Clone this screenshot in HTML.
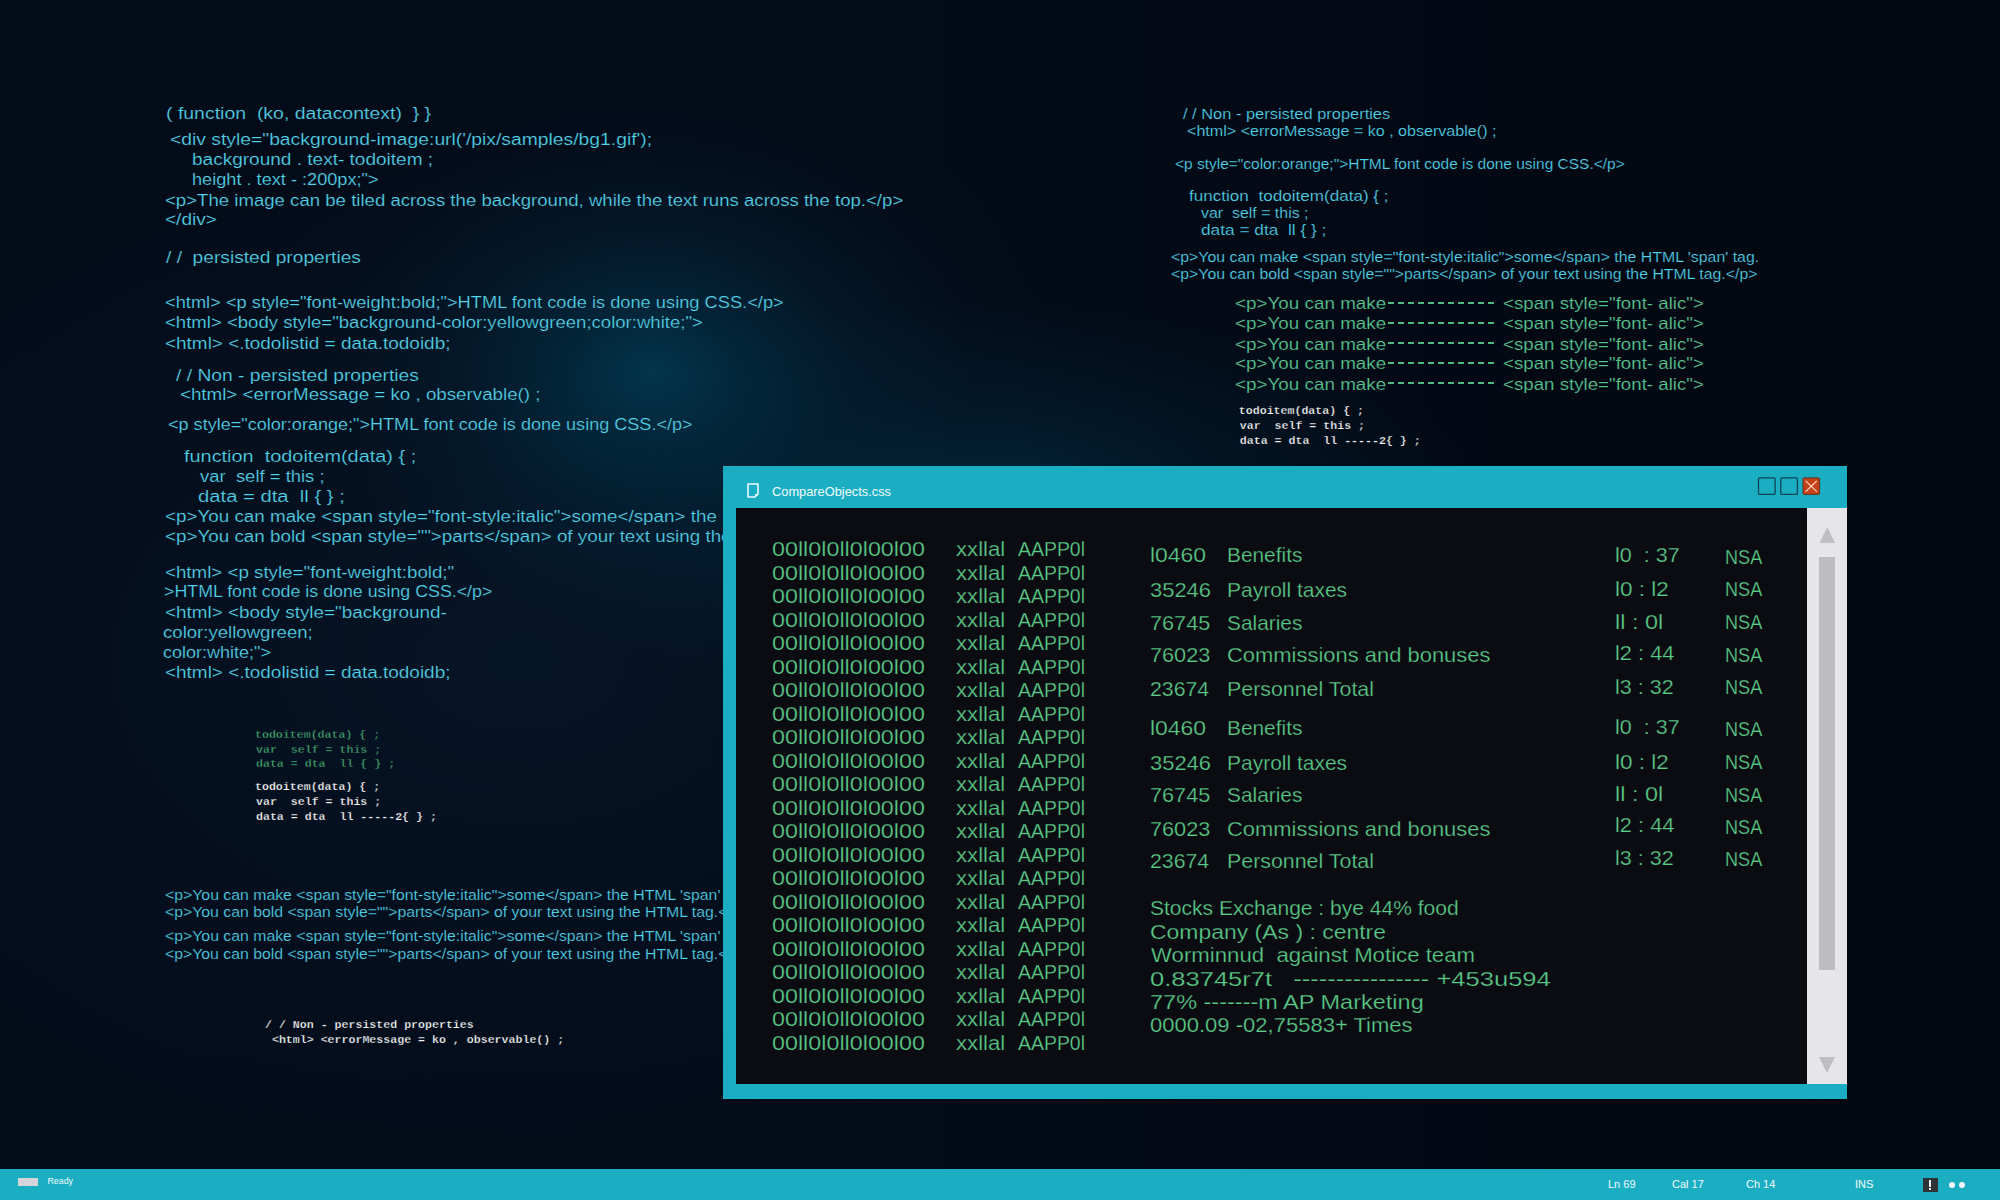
<!DOCTYPE html>
<html><head><meta charset="utf-8"><title>CompareObjects.css</title>
<style>
*{margin:0;padding:0;box-sizing:border-box}
html,body{width:2000px;height:1200px;overflow:hidden;background:#030a17}
body{position:relative;font-family:"Liberation Sans", sans-serif}
.bg{position:absolute;left:0;top:0;width:2000px;height:1200px;
 background:
  radial-gradient(ellipse 400px 300px at 652px 372px, rgba(2,62,86,0.80) 0%, rgba(3,50,72,0.62) 22%, rgba(3,36,56,0.38) 50%, rgba(3,22,38,0.12) 80%, rgba(3,20,36,0) 100%),
  radial-gradient(ellipse 520px 200px at 960px 500px, rgba(2,48,70,0.75) 0%, rgba(2,36,56,0.45) 45%, rgba(2,20,36,0) 100%),
  radial-gradient(ellipse 760px 520px at 520px 660px, rgba(6,22,40,0.85) 0%, rgba(5,18,34,0.5) 55%, rgba(3,10,23,0) 100%),
  linear-gradient(90deg, #040c1a 0%, #030b18 50%, #03070f 100%);}
.t{position:absolute;white-space:pre;transform-origin:0 0}
.cy{color:#54d3ea;-webkit-text-stroke:0.2px #041522}
.gr{color:#5ac792;-webkit-text-stroke:0.2px #04101c}
.wg{color:#5ccb88;-webkit-text-stroke:0.25px #0b0c12}
.mg{color:#44aa72;-webkit-text-stroke:0.35px #05101c}
.mw{color:#f6f6f6;-webkit-text-stroke:0.25px #05101c}
.win{position:absolute;left:723px;top:466px;width:1124px;height:633px;background:#1baec3}
.content{position:absolute;left:736px;top:508px;width:1071px;height:576px;background:#0b0c12}
.sb{position:absolute;left:1807px;top:508px;width:40px;height:576px;background:#e6e6e8}
.thumb{position:absolute;left:1819px;top:557px;width:16px;height:413px;background:#bdbdbf}
.status{position:absolute;left:0;top:1169px;width:2000px;height:31px;background:#1baec3}
.st{position:absolute;white-space:pre;color:#f2fbfd;font-size:11px;line-height:11px}
</style></head>
<body>
<div class="bg"></div>
<div class="t cy" style="left:165.78px;top:106.40px;font-size:16px;line-height:16px;transform:scaleX(1.2166);">( function  (ko, datacontext)  } }</div>
<div class="t cy" style="left:169.79px;top:132.00px;font-size:16px;line-height:16px;transform:scaleX(1.2065);">&lt;div style="background-image:url('/pix/samples/bg1.gif');</div>
<div class="t cy" style="left:191.81px;top:152.40px;font-size:16px;line-height:16px;transform:scaleX(1.1891);">background . text- todoitem ;</div>
<div class="t cy" style="left:191.87px;top:172.40px;font-size:16px;line-height:16px;transform:scaleX(1.1350);">height . text - :200px;"&gt;</div>
<div class="t cy" style="left:164.84px;top:192.60px;font-size:16px;line-height:16px;transform:scaleX(1.1625);">&lt;p&gt;The image can be tiled across the background, while the text runs across the top.&lt;/p&gt;</div>
<div class="t cy" style="left:164.81px;top:212.40px;font-size:16px;line-height:16px;transform:scaleX(1.1905);">&lt;/div&gt;</div>
<div class="t cy" style="left:166.00px;top:250.00px;font-size:16px;line-height:16px;transform:scaleX(1.1975);">/ /  persisted properties</div>
<div class="t cy" style="left:164.86px;top:295.00px;font-size:16px;line-height:16px;transform:scaleX(1.1412);">&lt;html&gt; &lt;p style="font-weight:bold;"&gt;HTML font code is done using CSS.&lt;/p&gt;</div>
<div class="t cy" style="left:164.84px;top:315.00px;font-size:16px;line-height:16px;transform:scaleX(1.1602);">&lt;html&gt; &lt;body style="background-color:yellowgreen;color:white;"&gt;</div>
<div class="t cy" style="left:164.82px;top:335.80px;font-size:16px;line-height:16px;transform:scaleX(1.1841);">&lt;html&gt; &lt;.todolistid = data.todoidb;</div>
<div class="t cy" style="left:176.00px;top:367.50px;font-size:16px;line-height:16px;transform:scaleX(1.2030);">/ / Non - persisted properties</div>
<div class="t cy" style="left:180.33px;top:387.00px;font-size:16px;line-height:16px;transform:scaleX(1.1716);">&lt;html&gt; &lt;errorMessage = ko , observable() ;</div>
<div class="t cy" style="left:167.87px;top:416.70px;font-size:16px;line-height:16px;transform:scaleX(1.1285);">&lt;p style="color:orange;"&gt;HTML font code is done using CSS.&lt;/p&gt;</div>
<div class="t cy" style="left:184.40px;top:448.90px;font-size:16px;line-height:16px;transform:scaleX(1.2430);">function  todoitem(data) { ;</div>
<div class="t cy" style="left:199.60px;top:468.70px;font-size:16px;line-height:16px;transform:scaleX(1.1533);">var  self = this ;</div>
<div class="t cy" style="left:198.34px;top:489.00px;font-size:16px;line-height:16px;transform:scaleX(1.2645);">data = dta  ll { } ;</div>
<div class="t cy" style="left:165.07px;top:508.70px;font-size:16px;line-height:16px;transform:scaleX(1.1760);">&lt;p&gt;You can make &lt;span style="font-style:italic"&gt;some&lt;/span&gt; the HTML 'span' tag.</div>
<div class="t cy" style="left:165.07px;top:529.00px;font-size:16px;line-height:16px;transform:scaleX(1.1760);">&lt;p&gt;You can bold &lt;span style=""&gt;parts&lt;/span&gt; of your text using the HTML tag.&lt;/p&gt;</div>
<div class="t cy" style="left:164.83px;top:564.50px;font-size:16px;line-height:16px;transform:scaleX(1.1707);">&lt;html&gt; &lt;p style="font-weight:bold;"</div>
<div class="t cy" style="left:164.49px;top:584.30px;font-size:16px;line-height:16px;transform:scaleX(1.1126);">&gt;HTML font code is done using CSS.&lt;/p&gt;</div>
<div class="t cy" style="left:164.82px;top:605.00px;font-size:16px;line-height:16px;transform:scaleX(1.1806);">&lt;html&gt; &lt;body style="background-</div>
<div class="t cy" style="left:162.84px;top:625.00px;font-size:16px;line-height:16px;transform:scaleX(1.1614);">color:yellowgreen;</div>
<div class="t cy" style="left:162.87px;top:644.70px;font-size:16px;line-height:16px;transform:scaleX(1.1255);">color:white;"&gt;</div>
<div class="t cy" style="left:164.82px;top:664.50px;font-size:16px;line-height:16px;transform:scaleX(1.1841);">&lt;html&gt; &lt;.todolistid = data.todoidb;</div>
<div class="t cy" style="left:164.66px;top:888.30px;font-size:14.5px;line-height:14.5px;transform:scaleX(1.0906);">&lt;p&gt;You can make &lt;span style="font-style:italic"&gt;some&lt;/span&gt; the HTML 'span' tag.</div>
<div class="t cy" style="left:164.66px;top:905.25px;font-size:14.5px;line-height:14.5px;transform:scaleX(1.0894);">&lt;p&gt;You can bold &lt;span style=""&gt;parts&lt;/span&gt; of your text using the HTML tag.&lt;/p&gt;</div>
<div class="t cy" style="left:164.66px;top:929.25px;font-size:14.5px;line-height:14.5px;transform:scaleX(1.0906);">&lt;p&gt;You can make &lt;span style="font-style:italic"&gt;some&lt;/span&gt; the HTML 'span' tag.</div>
<div class="t cy" style="left:164.66px;top:946.50px;font-size:14.5px;line-height:14.5px;transform:scaleX(1.0894);">&lt;p&gt;You can bold &lt;span style=""&gt;parts&lt;/span&gt; of your text using the HTML tag.&lt;/p&gt;</div>
<div class="t cy" style="left:1183.25px;top:107.00px;font-size:14.3px;line-height:14.3px;transform:scaleX(1.1486);">/ / Non - persisted properties</div>
<div class="t cy" style="left:1186.62px;top:123.50px;font-size:14.3px;line-height:14.3px;transform:scaleX(1.1255);">&lt;html&gt; &lt;errorMessage = ko , observable() ;</div>
<div class="t cy" style="left:1174.67px;top:157.25px;font-size:14.3px;line-height:14.3px;transform:scaleX(1.0827);">&lt;p style="color:orange;"&gt;HTML font code is done using CSS.&lt;/p&gt;</div>
<div class="t cy" style="left:1188.50px;top:188.75px;font-size:14.3px;line-height:14.3px;transform:scaleX(1.1958);">function  todoitem(data) { ;</div>
<div class="t cy" style="left:1201.25px;top:206.00px;font-size:14.3px;line-height:14.3px;transform:scaleX(1.1132);">var  self = this ;</div>
<div class="t cy" style="left:1201.25px;top:223.00px;font-size:14.3px;line-height:14.3px;transform:scaleX(1.2087);">data = dta  ll { } ;</div>
<div class="t cy" style="left:1170.89px;top:249.50px;font-size:14.3px;line-height:14.3px;transform:scaleX(1.1098);">&lt;p&gt;You can make &lt;span style="font-style:italic"&gt;some&lt;/span&gt; the HTML 'span' tag.</div>
<div class="t cy" style="left:1170.89px;top:266.60px;font-size:14.3px;line-height:14.3px;transform:scaleX(1.1080);">&lt;p&gt;You can bold &lt;span style=""&gt;parts&lt;/span&gt; of your text using the HTML tag.&lt;/p&gt;</div>
<div class="t gr" style="left:1234.86px;top:295.00px;font-size:16.5px;line-height:16.5px;transform:scaleX(1.1420);">&lt;p&gt;You can make</div>
<div class="t gr" style="left:1503.27px;top:295.00px;font-size:16.5px;line-height:16.5px;transform:scaleX(1.1330);">&lt;span style="font- alic"&gt;</div>
<div class="t gr" style="left:1234.86px;top:315.20px;font-size:16.5px;line-height:16.5px;transform:scaleX(1.1420);">&lt;p&gt;You can make</div>
<div class="t gr" style="left:1503.27px;top:315.20px;font-size:16.5px;line-height:16.5px;transform:scaleX(1.1330);">&lt;span style="font- alic"&gt;</div>
<div class="t gr" style="left:1234.86px;top:335.50px;font-size:16.5px;line-height:16.5px;transform:scaleX(1.1420);">&lt;p&gt;You can make</div>
<div class="t gr" style="left:1503.27px;top:335.50px;font-size:16.5px;line-height:16.5px;transform:scaleX(1.1330);">&lt;span style="font- alic"&gt;</div>
<div class="t gr" style="left:1234.86px;top:355.30px;font-size:16.5px;line-height:16.5px;transform:scaleX(1.1420);">&lt;p&gt;You can make</div>
<div class="t gr" style="left:1503.27px;top:355.30px;font-size:16.5px;line-height:16.5px;transform:scaleX(1.1330);">&lt;span style="font- alic"&gt;</div>
<div class="t gr" style="left:1234.86px;top:375.60px;font-size:16.5px;line-height:16.5px;transform:scaleX(1.1420);">&lt;p&gt;You can make</div>
<div class="t gr" style="left:1503.27px;top:375.60px;font-size:16.5px;line-height:16.5px;transform:scaleX(1.1330);">&lt;span style="font- alic"&gt;</div>
<div class="t mg" style="left:255.00px;top:728.60px;font-size:11.6px;line-height:11.6px;font-family:'Liberation Mono', monospace;font-weight:700;">todoitem(data) { ;</div>
<div class="t mg" style="left:256.00px;top:743.50px;font-size:11.6px;line-height:11.6px;font-family:'Liberation Mono', monospace;font-weight:700;">var  self = this ;</div>
<div class="t mg" style="left:256.00px;top:758.30px;font-size:11.6px;line-height:11.6px;font-family:'Liberation Mono', monospace;font-weight:700;">data = dta  ll { } ;</div>
<div class="t mw" style="left:255.00px;top:781.40px;font-size:11.6px;line-height:11.6px;font-family:'Liberation Mono', monospace;font-weight:700;">todoitem(data) { ;</div>
<div class="t mw" style="left:256.00px;top:796.30px;font-size:11.6px;line-height:11.6px;font-family:'Liberation Mono', monospace;font-weight:700;">var  self = this ;</div>
<div class="t mw" style="left:256.00px;top:811.00px;font-size:11.6px;line-height:11.6px;font-family:'Liberation Mono', monospace;font-weight:700;">data = dta  ll -----2{ } ;</div>
<div class="t mw" style="left:265.00px;top:1019.00px;font-size:11.6px;line-height:11.6px;font-family:'Liberation Mono', monospace;font-weight:700;">/ / Non - persisted properties</div>
<div class="t mw" style="left:265.00px;top:1034.00px;font-size:11.6px;line-height:11.6px;font-family:'Liberation Mono', monospace;font-weight:700;"> &lt;html&gt; &lt;errorMessage = ko , observable() ;</div>
<div class="t mw" style="left:1238.80px;top:405.20px;font-size:11.6px;line-height:11.6px;font-family:'Liberation Mono', monospace;font-weight:700;">todoitem(data) { ;</div>
<div class="t mw" style="left:1239.80px;top:419.80px;font-size:11.6px;line-height:11.6px;font-family:'Liberation Mono', monospace;font-weight:700;">var  self = this ;</div>
<div class="t mw" style="left:1239.80px;top:434.70px;font-size:11.6px;line-height:11.6px;font-family:'Liberation Mono', monospace;font-weight:700;">data = dta  ll -----2{ } ;</div>
<div style="position:absolute;left:1388px;top:301.80px;width:106.4px;height:1.9px;background:repeating-linear-gradient(90deg,#4fb985 0 6.4px,transparent 6.4px 10px)"></div>
<div style="position:absolute;left:1388px;top:322.00px;width:106.4px;height:1.9px;background:repeating-linear-gradient(90deg,#4fb985 0 6.4px,transparent 6.4px 10px)"></div>
<div style="position:absolute;left:1388px;top:342.30px;width:106.4px;height:1.9px;background:repeating-linear-gradient(90deg,#4fb985 0 6.4px,transparent 6.4px 10px)"></div>
<div style="position:absolute;left:1388px;top:362.10px;width:106.4px;height:1.9px;background:repeating-linear-gradient(90deg,#4fb985 0 6.4px,transparent 6.4px 10px)"></div>
<div style="position:absolute;left:1388px;top:382.40px;width:106.4px;height:1.9px;background:repeating-linear-gradient(90deg,#4fb985 0 6.4px,transparent 6.4px 10px)"></div>

<div class="win"></div>
<div class="content"></div>
<div class="sb"></div>
<svg style="position:absolute;left:0;top:0" width="2000" height="1200">
  <polygon points="1819.5,543 1835,543 1827.25,527" fill="#bfbfc1"/>
  <polygon points="1819,1057 1835,1057 1827,1073" fill="#bfbfc1"/>
  <!-- doc icon -->
  <path d="M748,484 H758 V494 L755,497 H748 Z" fill="none" stroke="#e6fbff" stroke-width="1.6" stroke-linejoin="round"/>
  <path d="M758,494 L755,497 L755,494 Z" fill="#e6fbff"/>
  <!-- window buttons -->
  <rect x="1758.5" y="477.9" width="16.6" height="16.5" rx="1.2" fill="none" stroke="#0c4356" stroke-width="1.3"/>
  <rect x="1780.8" y="477.9" width="16.6" height="16.5" rx="1.2" fill="none" stroke="#0c4356" stroke-width="1.3"/>
  <rect x="1803" y="477.9" width="16.6" height="16.5" rx="1" fill="#c4411a" stroke="#5e3322" stroke-width="1"/>
  <path d="M1805.6,480.9 L1816.8,491.6 M1816.8,480.9 L1805.6,491.6" stroke="#ffe0cc" stroke-width="1.1"/>
</svg>
<div class="thumb"></div>
<div class="t" style="left:771.5px;top:484.5px;font-size:13.5px;line-height:13.5px;color:#f2fbfd;transform:scaleX(0.95)">CompareObjects.css</div>

<div class="t wg" style="left:771.61px;top:539.40px;font-size:20.5px;line-height:20.5px;transform:scaleX(1.1372);">00ll0l0ll0l00l00</div>
<div class="t wg" style="left:955.50px;top:539.40px;font-size:20.5px;line-height:20.5px;transform:scaleX(1.0795);">xxllal</div>
<div class="t wg" style="left:1017.60px;top:539.40px;font-size:20.5px;line-height:20.5px;transform:scaleX(0.9478);">AAPP0l</div>
<div class="t wg" style="left:771.61px;top:562.90px;font-size:20.5px;line-height:20.5px;transform:scaleX(1.1372);">00ll0l0ll0l00l00</div>
<div class="t wg" style="left:955.50px;top:562.90px;font-size:20.5px;line-height:20.5px;transform:scaleX(1.0795);">xxllal</div>
<div class="t wg" style="left:1017.60px;top:562.90px;font-size:20.5px;line-height:20.5px;transform:scaleX(0.9478);">AAPP0l</div>
<div class="t wg" style="left:771.61px;top:586.40px;font-size:20.5px;line-height:20.5px;transform:scaleX(1.1372);">00ll0l0ll0l00l00</div>
<div class="t wg" style="left:955.50px;top:586.40px;font-size:20.5px;line-height:20.5px;transform:scaleX(1.0795);">xxllal</div>
<div class="t wg" style="left:1017.60px;top:586.40px;font-size:20.5px;line-height:20.5px;transform:scaleX(0.9478);">AAPP0l</div>
<div class="t wg" style="left:771.61px;top:609.90px;font-size:20.5px;line-height:20.5px;transform:scaleX(1.1372);">00ll0l0ll0l00l00</div>
<div class="t wg" style="left:955.50px;top:609.90px;font-size:20.5px;line-height:20.5px;transform:scaleX(1.0795);">xxllal</div>
<div class="t wg" style="left:1017.60px;top:609.90px;font-size:20.5px;line-height:20.5px;transform:scaleX(0.9478);">AAPP0l</div>
<div class="t wg" style="left:771.61px;top:633.40px;font-size:20.5px;line-height:20.5px;transform:scaleX(1.1372);">00ll0l0ll0l00l00</div>
<div class="t wg" style="left:955.50px;top:633.40px;font-size:20.5px;line-height:20.5px;transform:scaleX(1.0795);">xxllal</div>
<div class="t wg" style="left:1017.60px;top:633.40px;font-size:20.5px;line-height:20.5px;transform:scaleX(0.9478);">AAPP0l</div>
<div class="t wg" style="left:771.61px;top:656.90px;font-size:20.5px;line-height:20.5px;transform:scaleX(1.1372);">00ll0l0ll0l00l00</div>
<div class="t wg" style="left:955.50px;top:656.90px;font-size:20.5px;line-height:20.5px;transform:scaleX(1.0795);">xxllal</div>
<div class="t wg" style="left:1017.60px;top:656.90px;font-size:20.5px;line-height:20.5px;transform:scaleX(0.9478);">AAPP0l</div>
<div class="t wg" style="left:771.61px;top:680.40px;font-size:20.5px;line-height:20.5px;transform:scaleX(1.1372);">00ll0l0ll0l00l00</div>
<div class="t wg" style="left:955.50px;top:680.40px;font-size:20.5px;line-height:20.5px;transform:scaleX(1.0795);">xxllal</div>
<div class="t wg" style="left:1017.60px;top:680.40px;font-size:20.5px;line-height:20.5px;transform:scaleX(0.9478);">AAPP0l</div>
<div class="t wg" style="left:771.61px;top:703.90px;font-size:20.5px;line-height:20.5px;transform:scaleX(1.1372);">00ll0l0ll0l00l00</div>
<div class="t wg" style="left:955.50px;top:703.90px;font-size:20.5px;line-height:20.5px;transform:scaleX(1.0795);">xxllal</div>
<div class="t wg" style="left:1017.60px;top:703.90px;font-size:20.5px;line-height:20.5px;transform:scaleX(0.9478);">AAPP0l</div>
<div class="t wg" style="left:771.61px;top:727.40px;font-size:20.5px;line-height:20.5px;transform:scaleX(1.1372);">00ll0l0ll0l00l00</div>
<div class="t wg" style="left:955.50px;top:727.40px;font-size:20.5px;line-height:20.5px;transform:scaleX(1.0795);">xxllal</div>
<div class="t wg" style="left:1017.60px;top:727.40px;font-size:20.5px;line-height:20.5px;transform:scaleX(0.9478);">AAPP0l</div>
<div class="t wg" style="left:771.61px;top:750.90px;font-size:20.5px;line-height:20.5px;transform:scaleX(1.1372);">00ll0l0ll0l00l00</div>
<div class="t wg" style="left:955.50px;top:750.90px;font-size:20.5px;line-height:20.5px;transform:scaleX(1.0795);">xxllal</div>
<div class="t wg" style="left:1017.60px;top:750.90px;font-size:20.5px;line-height:20.5px;transform:scaleX(0.9478);">AAPP0l</div>
<div class="t wg" style="left:771.61px;top:774.40px;font-size:20.5px;line-height:20.5px;transform:scaleX(1.1372);">00ll0l0ll0l00l00</div>
<div class="t wg" style="left:955.50px;top:774.40px;font-size:20.5px;line-height:20.5px;transform:scaleX(1.0795);">xxllal</div>
<div class="t wg" style="left:1017.60px;top:774.40px;font-size:20.5px;line-height:20.5px;transform:scaleX(0.9478);">AAPP0l</div>
<div class="t wg" style="left:771.61px;top:797.90px;font-size:20.5px;line-height:20.5px;transform:scaleX(1.1372);">00ll0l0ll0l00l00</div>
<div class="t wg" style="left:955.50px;top:797.90px;font-size:20.5px;line-height:20.5px;transform:scaleX(1.0795);">xxllal</div>
<div class="t wg" style="left:1017.60px;top:797.90px;font-size:20.5px;line-height:20.5px;transform:scaleX(0.9478);">AAPP0l</div>
<div class="t wg" style="left:771.61px;top:821.40px;font-size:20.5px;line-height:20.5px;transform:scaleX(1.1372);">00ll0l0ll0l00l00</div>
<div class="t wg" style="left:955.50px;top:821.40px;font-size:20.5px;line-height:20.5px;transform:scaleX(1.0795);">xxllal</div>
<div class="t wg" style="left:1017.60px;top:821.40px;font-size:20.5px;line-height:20.5px;transform:scaleX(0.9478);">AAPP0l</div>
<div class="t wg" style="left:771.61px;top:844.90px;font-size:20.5px;line-height:20.5px;transform:scaleX(1.1372);">00ll0l0ll0l00l00</div>
<div class="t wg" style="left:955.50px;top:844.90px;font-size:20.5px;line-height:20.5px;transform:scaleX(1.0795);">xxllal</div>
<div class="t wg" style="left:1017.60px;top:844.90px;font-size:20.5px;line-height:20.5px;transform:scaleX(0.9478);">AAPP0l</div>
<div class="t wg" style="left:771.61px;top:868.40px;font-size:20.5px;line-height:20.5px;transform:scaleX(1.1372);">00ll0l0ll0l00l00</div>
<div class="t wg" style="left:955.50px;top:868.40px;font-size:20.5px;line-height:20.5px;transform:scaleX(1.0795);">xxllal</div>
<div class="t wg" style="left:1017.60px;top:868.40px;font-size:20.5px;line-height:20.5px;transform:scaleX(0.9478);">AAPP0l</div>
<div class="t wg" style="left:771.61px;top:891.90px;font-size:20.5px;line-height:20.5px;transform:scaleX(1.1372);">00ll0l0ll0l00l00</div>
<div class="t wg" style="left:955.50px;top:891.90px;font-size:20.5px;line-height:20.5px;transform:scaleX(1.0795);">xxllal</div>
<div class="t wg" style="left:1017.60px;top:891.90px;font-size:20.5px;line-height:20.5px;transform:scaleX(0.9478);">AAPP0l</div>
<div class="t wg" style="left:771.61px;top:915.40px;font-size:20.5px;line-height:20.5px;transform:scaleX(1.1372);">00ll0l0ll0l00l00</div>
<div class="t wg" style="left:955.50px;top:915.40px;font-size:20.5px;line-height:20.5px;transform:scaleX(1.0795);">xxllal</div>
<div class="t wg" style="left:1017.60px;top:915.40px;font-size:20.5px;line-height:20.5px;transform:scaleX(0.9478);">AAPP0l</div>
<div class="t wg" style="left:771.61px;top:938.90px;font-size:20.5px;line-height:20.5px;transform:scaleX(1.1372);">00ll0l0ll0l00l00</div>
<div class="t wg" style="left:955.50px;top:938.90px;font-size:20.5px;line-height:20.5px;transform:scaleX(1.0795);">xxllal</div>
<div class="t wg" style="left:1017.60px;top:938.90px;font-size:20.5px;line-height:20.5px;transform:scaleX(0.9478);">AAPP0l</div>
<div class="t wg" style="left:771.61px;top:962.40px;font-size:20.5px;line-height:20.5px;transform:scaleX(1.1372);">00ll0l0ll0l00l00</div>
<div class="t wg" style="left:955.50px;top:962.40px;font-size:20.5px;line-height:20.5px;transform:scaleX(1.0795);">xxllal</div>
<div class="t wg" style="left:1017.60px;top:962.40px;font-size:20.5px;line-height:20.5px;transform:scaleX(0.9478);">AAPP0l</div>
<div class="t wg" style="left:771.61px;top:985.90px;font-size:20.5px;line-height:20.5px;transform:scaleX(1.1372);">00ll0l0ll0l00l00</div>
<div class="t wg" style="left:955.50px;top:985.90px;font-size:20.5px;line-height:20.5px;transform:scaleX(1.0795);">xxllal</div>
<div class="t wg" style="left:1017.60px;top:985.90px;font-size:20.5px;line-height:20.5px;transform:scaleX(0.9478);">AAPP0l</div>
<div class="t wg" style="left:771.61px;top:1009.40px;font-size:20.5px;line-height:20.5px;transform:scaleX(1.1372);">00ll0l0ll0l00l00</div>
<div class="t wg" style="left:955.50px;top:1009.40px;font-size:20.5px;line-height:20.5px;transform:scaleX(1.0795);">xxllal</div>
<div class="t wg" style="left:1017.60px;top:1009.40px;font-size:20.5px;line-height:20.5px;transform:scaleX(0.9478);">AAPP0l</div>
<div class="t wg" style="left:771.61px;top:1032.90px;font-size:20.5px;line-height:20.5px;transform:scaleX(1.1372);">00ll0l0ll0l00l00</div>
<div class="t wg" style="left:955.50px;top:1032.90px;font-size:20.5px;line-height:20.5px;transform:scaleX(1.0795);">xxllal</div>
<div class="t wg" style="left:1017.60px;top:1032.90px;font-size:20.5px;line-height:20.5px;transform:scaleX(0.9478);">AAPP0l</div>
<div class="t wg" style="left:1150.04px;top:546.00px;font-size:19.8px;line-height:19.8px;transform:scaleX(1.1596);">l0460</div>
<div class="t wg" style="left:1227.15px;top:546.00px;font-size:19.8px;line-height:19.8px;transform:scaleX(1.0543);">Benefits</div>
<div class="t wg" style="left:1615.21px;top:545.80px;font-size:19.8px;line-height:19.8px;transform:scaleX(1.0879);">l0  : 37</div>
<div class="t wg" style="left:1725.09px;top:547.50px;font-size:19.8px;line-height:19.8px;transform:scaleX(0.9150);">NSA</div>
<div class="t wg" style="left:1150.09px;top:580.50px;font-size:19.8px;line-height:19.8px;transform:scaleX(1.1094);">35246</div>
<div class="t wg" style="left:1227.14px;top:580.50px;font-size:19.8px;line-height:19.8px;transform:scaleX(1.0607);">Payroll taxes</div>
<div class="t wg" style="left:1615.16px;top:580.00px;font-size:19.8px;line-height:19.8px;transform:scaleX(1.1391);">l0 : l2</div>
<div class="t wg" style="left:1725.09px;top:580.00px;font-size:19.8px;line-height:19.8px;transform:scaleX(0.9150);">NSA</div>
<div class="t wg" style="left:1150.10px;top:613.50px;font-size:19.8px;line-height:19.8px;transform:scaleX(1.0962);">76745</div>
<div class="t wg" style="left:1227.15px;top:613.50px;font-size:19.8px;line-height:19.8px;transform:scaleX(1.0543);">Salaries</div>
<div class="t wg" style="left:1615.12px;top:612.80px;font-size:19.8px;line-height:19.8px;transform:scaleX(1.1846);">ll : 0l</div>
<div class="t wg" style="left:1725.09px;top:612.80px;font-size:19.8px;line-height:19.8px;transform:scaleX(0.9150);">NSA</div>
<div class="t wg" style="left:1150.10px;top:646.00px;font-size:19.8px;line-height:19.8px;transform:scaleX(1.0962);">76023</div>
<div class="t wg" style="left:1227.09px;top:646.00px;font-size:19.8px;line-height:19.8px;transform:scaleX(1.1093);">Commissions and bonuses</div>
<div class="t wg" style="left:1615.20px;top:643.60px;font-size:19.8px;line-height:19.8px;transform:scaleX(1.1019);">l2 : 44</div>
<div class="t wg" style="left:1725.09px;top:645.70px;font-size:19.8px;line-height:19.8px;transform:scaleX(0.9150);">NSA</div>
<div class="t wg" style="left:1150.12px;top:680.00px;font-size:19.8px;line-height:19.8px;transform:scaleX(1.0759);">23674</div>
<div class="t wg" style="left:1227.12px;top:680.00px;font-size:19.8px;line-height:19.8px;transform:scaleX(1.0806);">Personnel Total</div>
<div class="t wg" style="left:1615.21px;top:677.50px;font-size:19.8px;line-height:19.8px;transform:scaleX(1.0904);">l3 : 32</div>
<div class="t wg" style="left:1725.09px;top:678.00px;font-size:19.8px;line-height:19.8px;transform:scaleX(0.9150);">NSA</div>
<div class="t wg" style="left:1150.04px;top:718.50px;font-size:19.8px;line-height:19.8px;transform:scaleX(1.1596);">l0460</div>
<div class="t wg" style="left:1227.15px;top:718.50px;font-size:19.8px;line-height:19.8px;transform:scaleX(1.0543);">Benefits</div>
<div class="t wg" style="left:1615.21px;top:718.20px;font-size:19.8px;line-height:19.8px;transform:scaleX(1.0879);">l0  : 37</div>
<div class="t wg" style="left:1725.09px;top:719.70px;font-size:19.8px;line-height:19.8px;transform:scaleX(0.9150);">NSA</div>
<div class="t wg" style="left:1150.09px;top:753.50px;font-size:19.8px;line-height:19.8px;transform:scaleX(1.1094);">35246</div>
<div class="t wg" style="left:1227.14px;top:753.50px;font-size:19.8px;line-height:19.8px;transform:scaleX(1.0607);">Payroll taxes</div>
<div class="t wg" style="left:1615.16px;top:752.70px;font-size:19.8px;line-height:19.8px;transform:scaleX(1.1391);">l0 : l2</div>
<div class="t wg" style="left:1725.09px;top:753.00px;font-size:19.8px;line-height:19.8px;transform:scaleX(0.9150);">NSA</div>
<div class="t wg" style="left:1150.10px;top:786.00px;font-size:19.8px;line-height:19.8px;transform:scaleX(1.0962);">76745</div>
<div class="t wg" style="left:1227.15px;top:786.00px;font-size:19.8px;line-height:19.8px;transform:scaleX(1.0543);">Salaries</div>
<div class="t wg" style="left:1615.12px;top:784.80px;font-size:19.8px;line-height:19.8px;transform:scaleX(1.1846);">ll : 0l</div>
<div class="t wg" style="left:1725.09px;top:785.70px;font-size:19.8px;line-height:19.8px;transform:scaleX(0.9150);">NSA</div>
<div class="t wg" style="left:1150.10px;top:819.50px;font-size:19.8px;line-height:19.8px;transform:scaleX(1.0962);">76023</div>
<div class="t wg" style="left:1227.09px;top:819.50px;font-size:19.8px;line-height:19.8px;transform:scaleX(1.1093);">Commissions and bonuses</div>
<div class="t wg" style="left:1615.20px;top:816.30px;font-size:19.8px;line-height:19.8px;transform:scaleX(1.1019);">l2 : 44</div>
<div class="t wg" style="left:1725.09px;top:818.20px;font-size:19.8px;line-height:19.8px;transform:scaleX(0.9150);">NSA</div>
<div class="t wg" style="left:1150.12px;top:852.00px;font-size:19.8px;line-height:19.8px;transform:scaleX(1.0759);">23674</div>
<div class="t wg" style="left:1227.12px;top:852.00px;font-size:19.8px;line-height:19.8px;transform:scaleX(1.0806);">Personnel Total</div>
<div class="t wg" style="left:1615.21px;top:849.30px;font-size:19.8px;line-height:19.8px;transform:scaleX(1.0904);">l3 : 32</div>
<div class="t wg" style="left:1725.09px;top:850.20px;font-size:19.8px;line-height:19.8px;transform:scaleX(0.9150);">NSA</div>
<div class="t wg" style="left:1149.97px;top:898.25px;font-size:20.5px;line-height:20.5px;transform:scaleX(1.0261);">Stocks Exchange : bye 44% food</div>
<div class="t wg" style="left:1149.88px;top:921.75px;font-size:20.5px;line-height:20.5px;transform:scaleX(1.1196);">Company (As ) : centre</div>
<div class="t wg" style="left:1151.00px;top:945.25px;font-size:20.5px;line-height:20.5px;transform:scaleX(1.0826);">Worminnud  against Motice team</div>
<div class="t wg" style="left:1149.75px;top:968.75px;font-size:20.5px;line-height:20.5px;transform:scaleX(1.2452);">0.83745r7t   ---------------- +453u594</div>
<div class="t wg" style="left:1149.85px;top:992.25px;font-size:20.5px;line-height:20.5px;transform:scaleX(1.1460);">77% -------m AP Marketing</div>
<div class="t wg" style="left:1149.93px;top:1015.30px;font-size:20.5px;line-height:20.5px;transform:scaleX(1.0741);">0000.09 -02,75583+ Times</div>

<div class="status"></div>
<div style="position:absolute;left:18px;top:1177.5px;width:20px;height:8.5px;background:#d3d4da"></div>
<div class="st" style="left:47.5px;top:1176.5px;font-size:8.8px;line-height:9px">Ready</div>
<div class="st" style="left:1608px;top:1179px">Ln 69</div>
<div class="st" style="left:1672px;top:1179px">Cal 17</div>
<div class="st" style="left:1746px;top:1179px">Ch 14</div>
<div class="st" style="left:1855px;top:1179px">INS</div>
<div style="position:absolute;left:1923px;top:1178px;width:14.5px;height:14px;background:#2e3338"></div>
<div style="position:absolute;left:1928.7px;top:1180px;width:2.6px;height:6.5px;background:#f0f0f0"></div>
<div style="position:absolute;left:1928.7px;top:1188px;width:2.6px;height:2.4px;background:#f0f0f0"></div>
<div style="position:absolute;left:1948.5px;top:1181.8px;width:6.4px;height:6.4px;border-radius:50%;background:#f4f8fa"></div>
<div style="position:absolute;left:1958.8px;top:1181.8px;width:6.4px;height:6.4px;border-radius:50%;background:#f4f8fa"></div>

</body></html>
